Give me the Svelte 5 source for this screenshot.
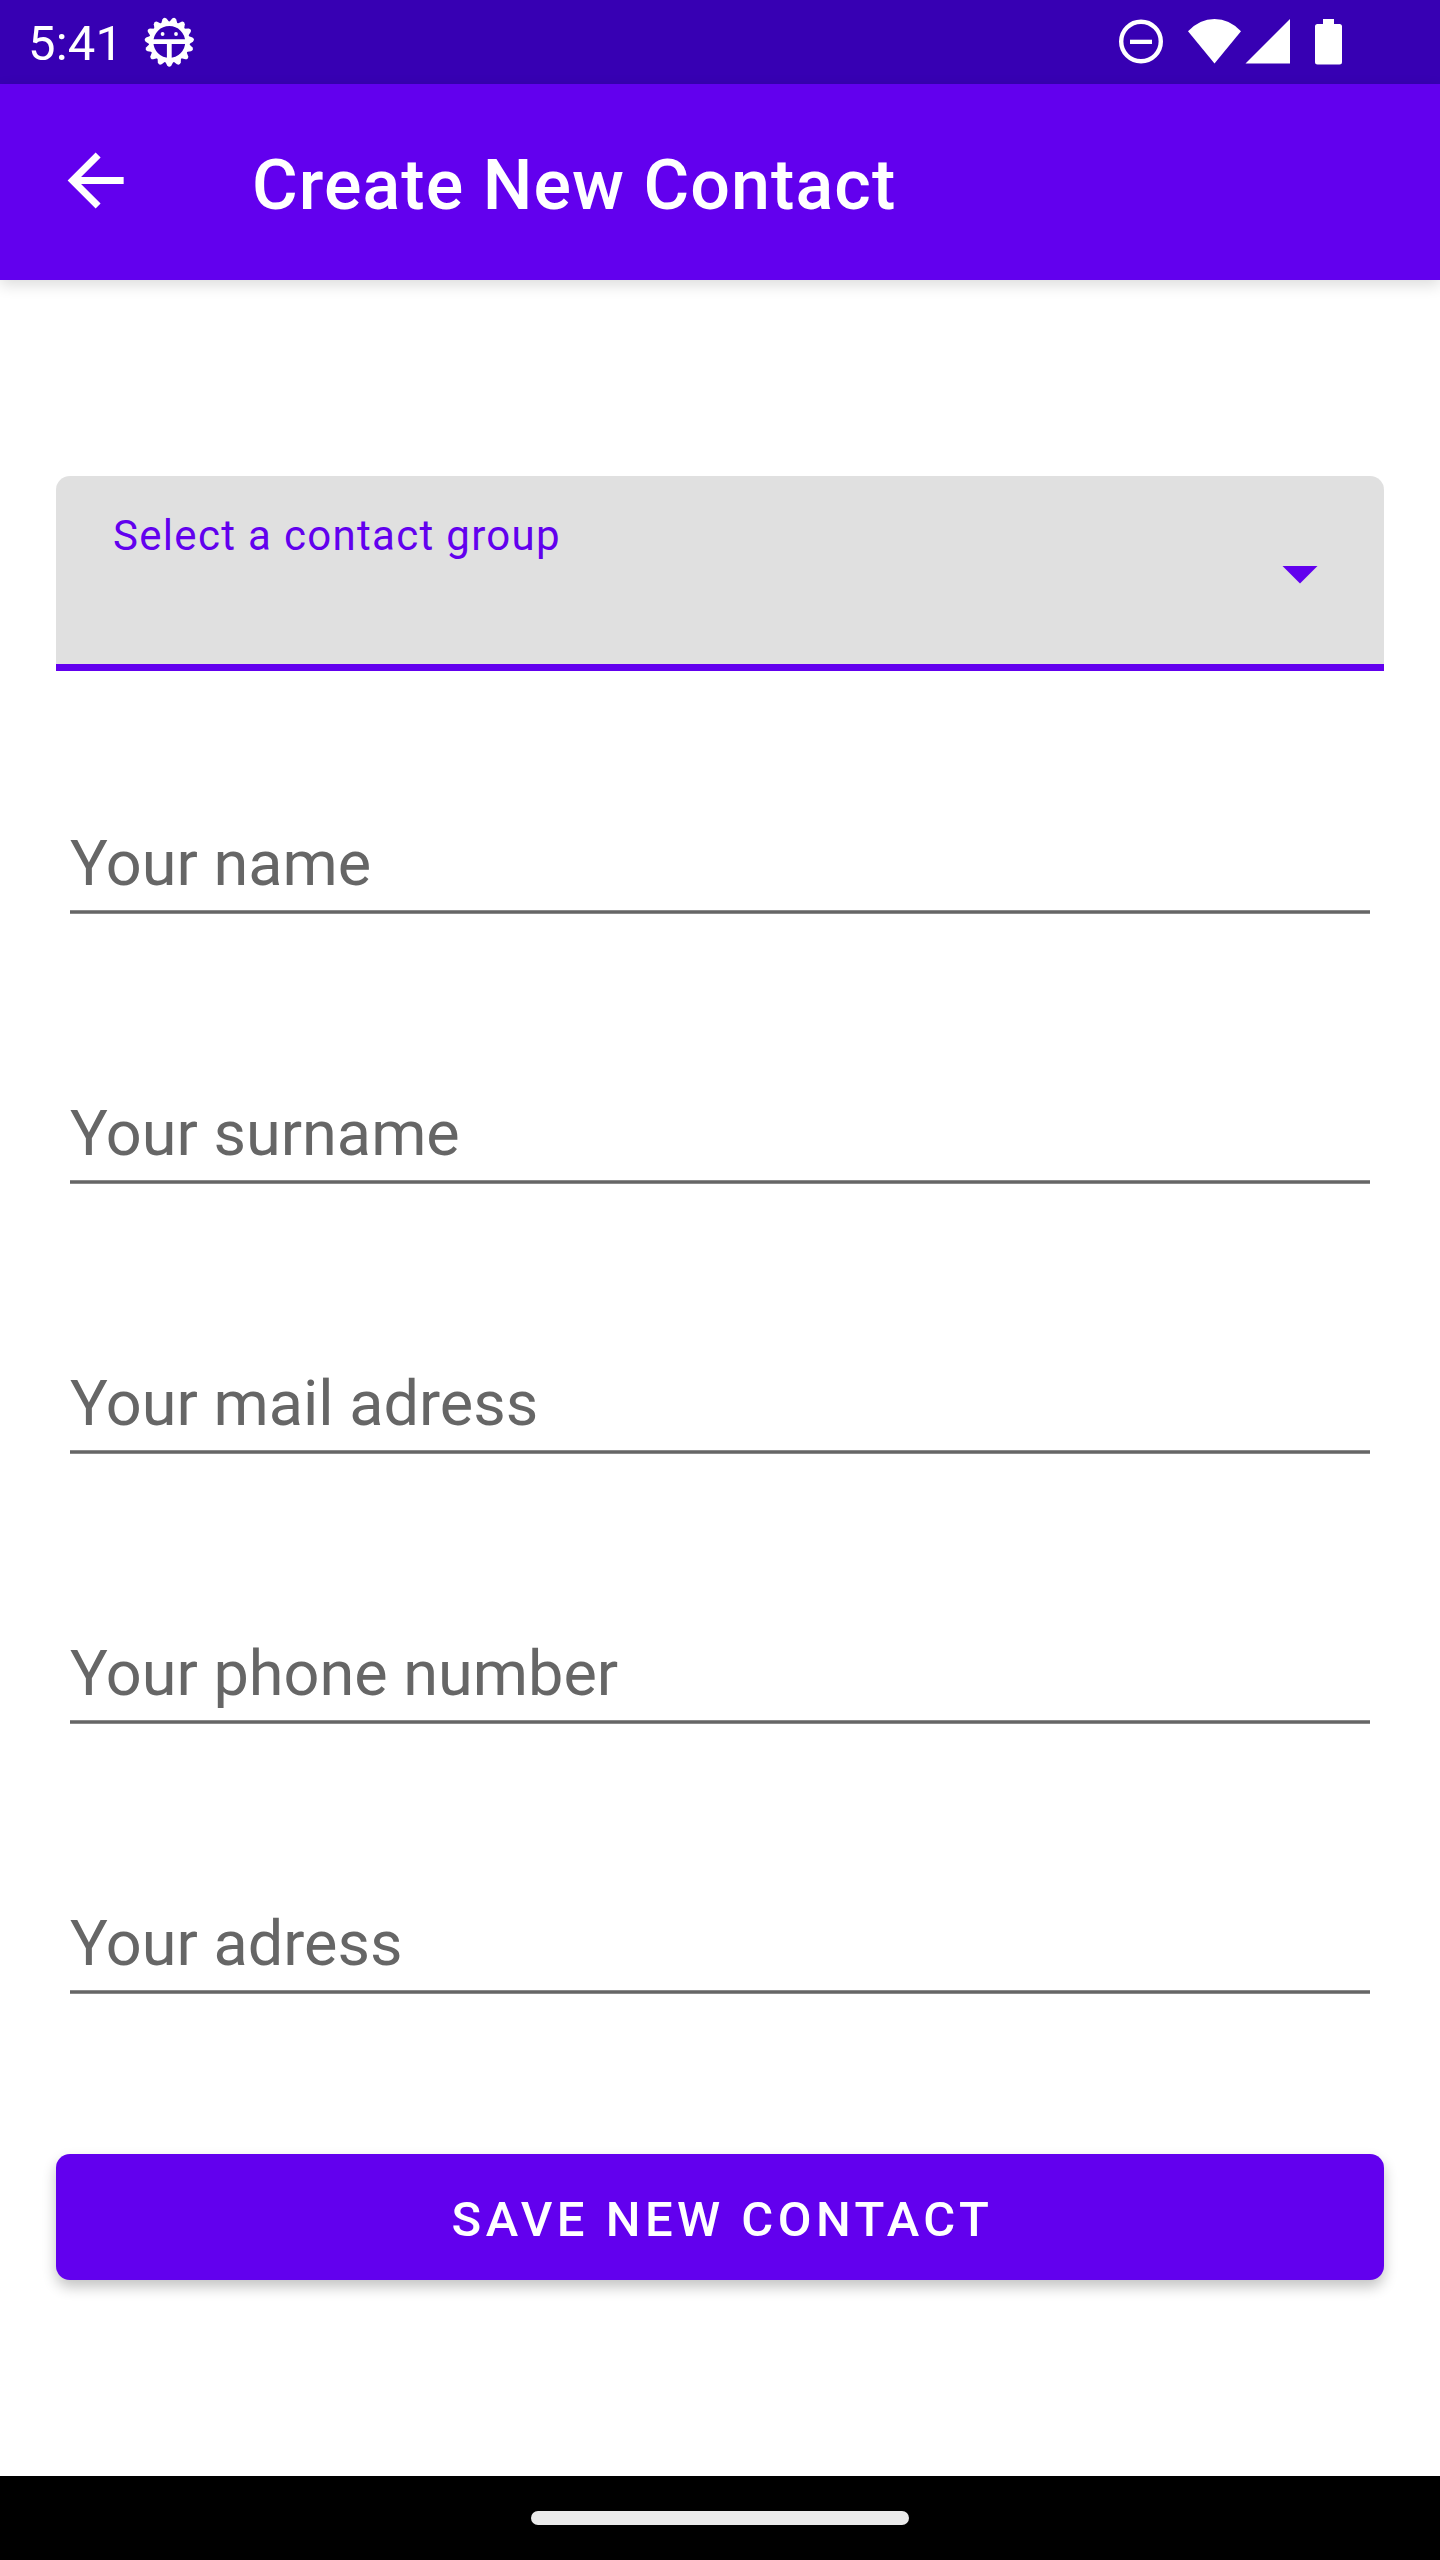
<script>
  const fields = ['Your name', 'Your surname', 'Your mail adress', 'Your phone number', 'Your adress'];
  const teeth = Array.from({ length: 15 }, (_, i) => i * 24);
</script>

<div class="screen">
  <header class="status">
    <span class="clock">5:41</span>
    <svg class="debug" width="52" height="52" viewBox="-26.3 -26 52 52">
      <circle r="18.2" fill="none" stroke="#fff" stroke-width="4.6" />
      {#each teeth as angle}
        <path d="M-4.4 19L-2.1 23.5Q0 26 2.1 23.5L4.4 19Z" fill="#fff" transform="rotate({angle})" />
      {/each}
      <path d="M-17-2.7H17V2H2.4V17H-2.4V2H-17Z" fill="#fff" />
      <circle cx="-6.7" cy="-8" r="1.9" fill="#fff" />
      <circle cx="6.7" cy="-8" r="1.9" fill="#fff" />
    </svg>
    <svg class="indicators" width="224" height="46" viewBox="1119 19 224 46" fill="#fff">
      <circle cx="1141" cy="41.5" r="19.8" fill="none" stroke="#fff" stroke-width="4.4" />
      <path d="M1130 39.7H1152V44H1130Z" />
      <path d="M1188 31.3Q1199.5 19 1214.5 19Q1229.5 19 1241 31.3L1214.5 63.4Z" />
      <path d="M1245.5 63.5H1290V19Z" />
      <path d="M1323 19H1334V24H1339.5Q1342 24 1342 26.5V62Q1342 64.5 1339.5 64.5H1317.5Q1315 64.5 1315 62V26.5Q1315 24 1317.5 24H1323Z" />
    </svg>
  </header>

  <div class="appbar">
    <button class="back" aria-label="Back">
      <svg width="84" height="84" viewBox="0.1 -0.15 24 24" fill="#fff">
        <path d="M20 11H7.83l5.59-5.59L12 4l-8 8 8 8 1.41-1.41L7.83 13H20v-2z" />
      </svg>
    </button>
    <h1>Create New Contact</h1>
  </div>

  <main>
    <div class="select">
      <span class="label">Select a contact group</span>
      <svg width="84" height="84" viewBox="0 0 24 24" fill="#6200ee"><path d="M7 10l5 5 5-5z" /></svg>
    </div>
    <div class="fields">
      {#each fields as name}
        <input type="text" placeholder={name} aria-label={name} />
      {/each}
    </div>
    <button class="save">SAVE NEW CONTACT</button>
  </main>

  <footer><div class="pill"></div></footer>
</div>

<style>
  :global(body) {
    margin: 0;
    background: #fff;
  }
  .screen {
    width: 1440px;
    height: 2560px;
    display: flex;
    flex-direction: column;
    background: #fff;
    font-family: Roboto, sans-serif;
    overflow: hidden;
  }
  svg {
    display: block;
    flex: none;
  }
  button,
  input {
    border: 0;
    font-family: inherit;
  }
  button {
    color: #fff;
  }
  .status {
    box-sizing: border-box;
    height: 84px;
    flex: none;
    display: flex;
    align-items: flex-start;
    padding: 0 97px 0 28px;
    background: #3700b3;
    color: #fff;
  }
  .clock {
    width: 115px;
    font-size: 49px;
    line-height: 88px;
    letter-spacing: 0.2px;
  }
  .debug {
    margin-top: 16px;
  }
  .indicators {
    margin: 19px 0 0 auto;
  }
  .appbar {
    box-sizing: border-box;
    height: 196px;
    flex: none;
    display: flex;
    align-items: flex-start;
    padding-left: 54px;
    background: #6200ee;
    box-shadow: 0 5px 14px rgba(0, 0, 0, 0.14);
  }
  .back {
    margin: 54px 0 0;
    padding: 0;
    background: none;
  }
  h1 {
    margin: 0 0 0 114px;
    color: #fff;
    font-size: 70px;
    font-weight: 500;
    line-height: 202px;
    letter-spacing: 1.07px;
  }
  main {
    flex: 1;
    display: flex;
    flex-direction: column;
    padding: 196px 56px 0;
  }
  .select {
    box-sizing: border-box;
    height: 195px;
    display: flex;
    justify-content: space-between;
    align-items: flex-start;
    padding: 0 42px 0 57px;
    border-radius: 14px 14px 0 0;
    background: linear-gradient(#e0e0e0 188px, #6200ee 188px);
  }
  .label {
    color: #6200ee;
    font-size: 42px;
    line-height: 60px;
    margin-top: 30px;
    letter-spacing: 0.03125em;
  }
  .select svg {
    margin-top: 55px;
  }
  .fields {
    display: flex;
    flex-direction: column;
    gap: 170px;
    padding: 143px 14px 0;
  }
  input {
    box-sizing: border-box;
    width: 100%;
    height: 100px;
    margin: 0;
    padding: 0 0 1px;
    outline: 0;
    font-size: 63px;
    background: linear-gradient(#8a8a8a 1px, #666 1px 3px, #8a8a8a 3px) bottom / 100% 4px no-repeat;
  }
  input::placeholder {
    color: #666;
    opacity: 1;
  }
  .save {
    height: 126px;
    margin-top: 160px;
    padding: 4px 0 0 5px;
    border-radius: 14px;
    background: #6200ee;
    font-size: 49px;
    font-weight: 500;
    letter-spacing: 4.48px;
    box-shadow: 0 7px 14px rgba(0, 0, 0, 0.24);
  }
  footer {
    height: 84px;
    flex: none;
    display: flex;
    align-items: center;
    justify-content: center;
    background: #000;
  }
  .pill {
    width: 378px;
    height: 14px;
    border-radius: 7px;
    background: #ebebeb;
  }
</style>
